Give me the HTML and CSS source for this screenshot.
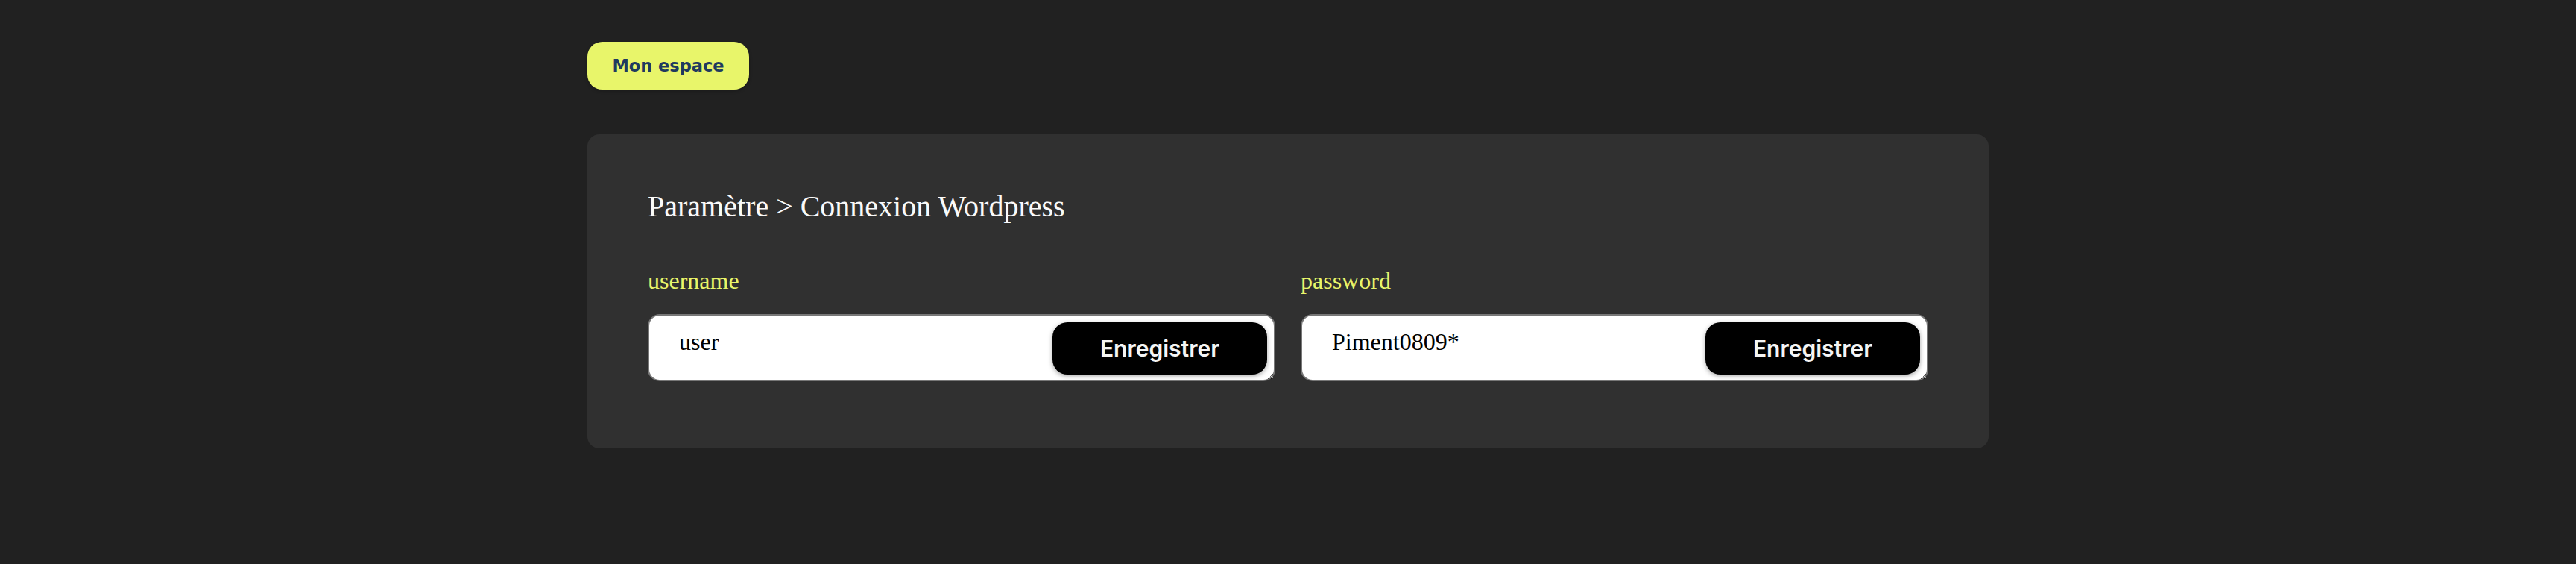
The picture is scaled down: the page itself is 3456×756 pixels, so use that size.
FILE: index.html
```html
<!DOCTYPE html>
<html lang="fr">
<head>
<meta charset="utf-8">
<title>Connexion Wordpress</title>
<link rel="stylesheet" href="styles.css">
</head>
<body>
<main class="page">
  <button class="space-btn" type="button">Mon espace</button>
  <section class="card">
    <h1 class="card-title">Paramètre &gt; Connexion Wordpress</h1>
    <div class="fields">
      <div class="field">
        <label class="field-label" for="username">username</label>
        <div class="field-box">
          <textarea class="field-input" id="username">user</textarea>
          <button class="save-btn" type="button">Enregistrer</button>
        </div>
      </div>
      <div class="field">
        <label class="field-label" for="password">password</label>
        <div class="field-box">
          <textarea class="field-input" id="password">Piment0809*</textarea>
          <button class="save-btn" type="button">Enregistrer</button>
        </div>
      </div>
    </div>
  </section>
</main>
</body>
</html>
```

FILE: styles.css
```css
html, body {
  margin: 0;
  padding: 0;
  background: #212121;
}

.page {
  width: 1880px;
  margin: 0 auto;
  padding-top: 56px;
}

.space-btn {
  display: flex;
  align-items: center;
  justify-content: center;
  width: 217px;
  height: 64px;
  box-sizing: border-box;
  border: none;
  border-radius: 20px;
  background: #e8f56a;
  color: #1f3a5f;
  font-family: "DejaVu Sans", sans-serif;
  font-weight: bold;
  font-size: 22.5px;
  box-shadow: 0 2px 4px rgba(0, 0, 0, 0.25);
  padding: 0;
  cursor: pointer;
}

.card {
  margin-top: 60px;
  background: #303030;
  border-radius: 16px;
  padding: 74px 81px 90px;
}

.card-title {
  margin: 0 0 59px;
  font-family: "Liberation Serif", serif;
  font-weight: normal;
  font-size: 40px;
  line-height: 45px;
  color: #fafafa;
}

.fields {
  display: grid;
  grid-template-columns: 1fr 1fr;
  column-gap: 34px;
}

.field {
  display: flex;
  flex-direction: column;
  gap: 26px;
}

.field-label {
  font-family: "Liberation Serif", serif;
  font-size: 32px;
  line-height: 37px;
  color: #e8f56a;
}

.field-box {
  position: relative;
  height: 90px;
}

.field-input {
  display: block;
  width: 100%;
  height: 90px;
  box-sizing: border-box;
  margin: 0;
  border: 2px solid #777777;
  border-radius: 16px;
  padding: 17px 40px;
  background: #ffffff;
  color: #000000;
  font-family: "Liberation Serif", serif;
  font-size: 32px;
  line-height: normal;
  outline: none;
}

.save-btn {
  position: absolute;
  top: 11px;
  right: 11px;
  width: 288px;
  height: 70px;
  border: none;
  border-radius: 20px;
  background: #000000;
  color: #f5f5f5;
  font-family: Inter, "Liberation Sans", sans-serif;
  font-weight: 600;
  font-size: 30px;
  padding: 0;
  box-shadow: 0 2px 6px rgba(0, 0, 0, 0.35);
  cursor: pointer;
}
```
